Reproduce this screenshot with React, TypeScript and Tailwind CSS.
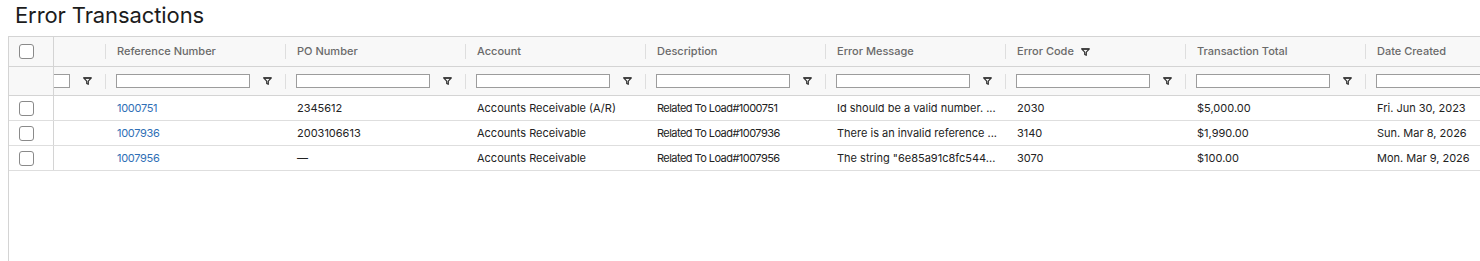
import React from "react";

const cols = [
  "",
  "Reference Number",
  "PO Number",
  "Account",
  "Description",
  "Error Message",
  "Error Code",
  "Transaction Total",
  "Date Created",
];

const rows = [
  ["1000751", "2345612", "Accounts Receivable (A/R)", "Related To Load#1000751", "Id should be a valid number. ...", "2030", "$5,000.00", "Fri. Jun 30, 2023"],
  ["1007936", "2003106613", "Accounts Receivable", "Related To Load#1007936", "There is an invalid reference ...", "3140", "$1,990.00", "Sun. Mar 8, 2026"],
  ["1007956", "—", "Accounts Receivable", "Related To Load#1007956", "The string \"6e85a91c8fc544...", "3070", "$100.00", "Mon. Mar 9, 2026"],
];

function FilterIcon() {
  return (
    <svg width="9" height="8" viewBox="0 0 9 8" className="shrink-0">
      <path d="M0.6 0.8 H8.4 L5.3 4.2 V7.3 L3.7 6.4 V4.2 Z" fill="none" stroke="#333" strokeWidth="1.2" strokeLinejoin="round" />
      <path d="M1 1.1 H8" stroke="#333" strokeWidth="1.4" />
    </svg>
  );
}

function Sep() {
  return <div className="w-px h-[15px] bg-[#dedede] shrink-0" />;
}

function Checkbox() {
  return <div className="w-[15px] h-[15px] rounded-[3px] border border-[#8a8a8a] bg-white" />;
}

export default function App() {
  return (
    <div className="w-[1480px] h-[261px] bg-white overflow-hidden font-['Inter','Noto_Sans',sans-serif]">
      <div className="h-9 pl-[15px] text-[22px] leading-[30px] text-[#1c1c1c] tracking-[-0.1px]">Error Transactions</div>
      <div className="ml-2 h-[225px] border-l border-t border-[#d4d4d4] overflow-hidden">
        {/* header */}
        <div className="flex h-[30px] border-b border-[#d4d4d4] bg-[#f8f8f8]">
          <div className="w-[45px] shrink-0 border-r border-[#d4d4d4] flex items-center pl-[10px]">
            <Checkbox />
          </div>
          <div className="flex-1 overflow-hidden">
            <div className="flex h-full -ml-[128px] w-max">
              {cols.map((c, i) => (
                <div key={i} className="w-[180px] h-full flex items-center">
                  <div className="flex-1 flex items-center pl-[11px] text-[11px] text-[#6a6a6a] font-medium">
                    {c}
                    {c === "Error Code" && (
                      <span className="ml-[7px] flex">
                        <FilterIcon />
                      </span>
                    )}
                  </div>
                  <Sep />
                </div>
              ))}
            </div>
          </div>
        </div>
        {/* filter row */}
        <div className="flex h-[29px] border-b border-[#d4d4d4] bg-[#f8f8f8]">
          <div className="w-[45px] shrink-0 border-r border-[#d4d4d4]" />
          <div className="flex-1 overflow-hidden">
            <div className="flex h-full -ml-[128px] w-max">
              {cols.map((c, i) => (
                <div key={i} className="w-[180px] h-full flex items-center pl-[10px]">
                  <div className="w-[134px] h-[14px] border border-[#9c9c9c] bg-white shrink-0" />
                  <div className="flex-1 flex justify-center">
                    <FilterIcon />
                  </div>
                  <Sep />
                </div>
              ))}
            </div>
          </div>
        </div>
        {/* data rows */}
        {rows.map((r, ri) => (
          <div key={ri} className="flex h-[25px] border-b border-[#dedede] bg-white">
            <div className="w-[45px] shrink-0 border-r border-[#d4d4d4] flex items-center pl-[10px]">
              <Checkbox />
            </div>
            <div className="flex-1 overflow-hidden">
              <div className="flex h-full -ml-[128px] w-max">
                <div className="w-[180px] h-full" />
                {r.map((v, i) => (
                  <div
                    key={i}
                    className={
                      "w-[180px] h-full flex items-center pl-[11px] text-[11px] whitespace-nowrap " +
                      (i === 0 ? "text-[#2f6fb6] tracking-[-0.3px] " : "text-[#222222] ") +
                      (i === 3 ? "tracking-[-0.55px]" : "")
                    }
                  >
                    {v}
                  </div>
                ))}
              </div>
            </div>
          </div>
        ))}
      </div>
    </div>
  );
}
